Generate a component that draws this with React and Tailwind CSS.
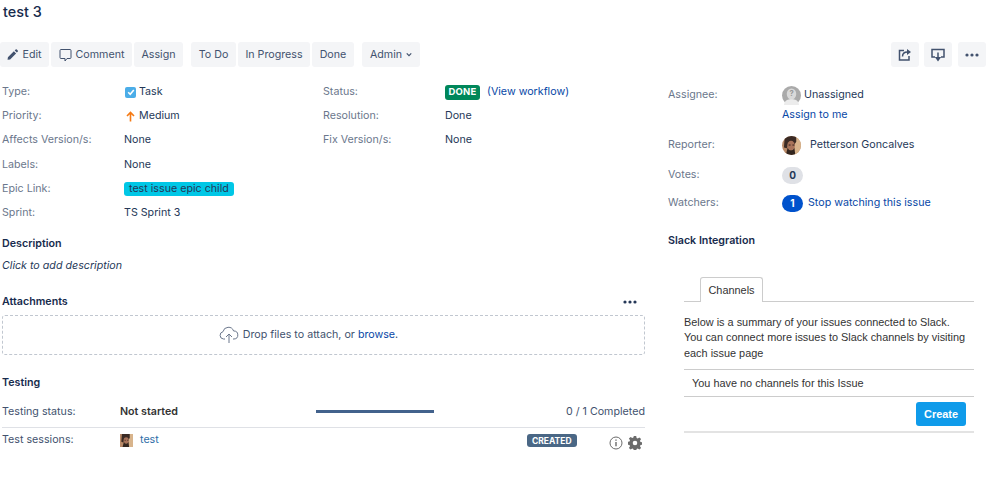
import React from "react";

const Btn = ({ w, children }) => (
  <div className={`${w} h-[25px] shrink-0 flex items-center justify-center gap-[4px] rounded-[3px] bg-[#f4f5f7] text-[#42526e]`}>{children}</div>
);

const Row = ({ label, children, second, secondLabel }) => (
  <div className="flex h-[24.2px] items-center">
    <div className="w-[124px] pl-[2px] text-[#6b778c]">{label}</div>
    <div className="w-[199px] flex items-center text-[#253858]">{children}</div>
    {secondLabel && <div className="w-[122px] text-[#6b778c]">{secondLabel}</div>}
    {second}
  </div>
);

const Face = () => (
  <>
    <rect width="20" height="20" fill="#b98a68" />
    <rect x="13" width="7" height="20" fill="#d8b48c" />
    <path d="M3 0h12v6l-2 3H7L5 13 2 12z" fill="#3a2a24" />
    <ellipse cx="9.5" cy="10" rx="4" ry="5" fill="#a8735a" />
    <path d="M6 12c1 4 6 4 7 0l1 8H4z" fill="#33261f" />
    <rect x="7" y="9" width="2" height="1" fill="#2a1d18" />
    <rect x="11" y="9" width="2" height="1" fill="#2a1d18" />
  </>
);

const Dots = ({ color = "#42526e" }) => (
  <svg width="14" height="4" viewBox="0 0 14 4" fill={color}>
    <circle cx="2" cy="2" r="1.6" /><circle cx="7" cy="2" r="1.6" /><circle cx="12" cy="2" r="1.6" />
  </svg>
);

export default function App() {
  return (
    <div className="w-[999px] h-[489px] overflow-hidden bg-white text-[10.7px] leading-[16px] font-['Inter','Liberation_Sans',sans-serif] flex">
      <div className="w-[645px] shrink-0">
        <h1 className="pl-[3px] pt-[1px] h-[42px] text-[14.4px] leading-[22px] font-medium text-[#172b4d]">test 3</h1>
        <div className="flex h-[25px]">
          <div className="flex gap-[2px]">
            <Btn w="w-[49px]">
              <svg width="11" height="11" viewBox="0 0 12 12" fill="#42526e"><path d="M1 9l6.5-6.5 2.4 2.4L3.4 11.4 0.6 11.8zM8.4 1.6l1-1a1 1 0 0 1 1.3 0l1 1a1 1 0 0 1 0 1.3l-1 1z" /></svg>
              Edit
            </Btn>
            <Btn w="w-[81px]">
              <svg width="13" height="14" viewBox="0 0 13 14" fill="none" stroke="#42526e" strokeWidth="1"><path d="M2 1.5h9a1 1 0 0 1 1 1v7a1 1 0 0 1-1 1H8l-2 2.5v-2.5H2a1 1 0 0 1-1-1v-7a1 1 0 0 1 1-1z" /></svg>
              Comment
            </Btn>
            <Btn w="w-[49px]">Assign</Btn>
          </div>
          <div className="flex gap-[2px] ml-[8px]">
            <Btn w="w-[45px]">To Do</Btn>
            <Btn w="w-[72px]">In Progress</Btn>
            <Btn w="w-[42px]">Done</Btn>
          </div>
          <div className="ml-[8px]">
            <Btn w="w-[58px]">
              Admin
              <svg width="6" height="5" viewBox="0 0 8 6" fill="none" stroke="#42526e" strokeWidth="1.6"><path d="M1 1.5l3 3 3-3" /></svg>
            </Btn>
          </div>
        </div>
        <div className="mt-[12px] pt-[1px]">
          <Row label="Type:" secondLabel="Status:" second={
            <div className="flex items-center">
              <span className="h-[15px] w-[35px] flex items-center justify-center rounded-[3px] bg-[#00875a] text-white text-[9.5px] font-bold tracking-[0.2px]">DONE</span>
              <span className="ml-[7px] text-[#0747a6]">(View workflow)</span>
            </div>
          }>
            <span className="ml-[1px] w-[11px] h-[11px] rounded-[2px] bg-[#4bade8] flex items-center justify-center">
              <svg width="8" height="8" viewBox="0 0 8 8" fill="none" stroke="#fff" strokeWidth="1.6"><path d="M1.2 4.2l2 2 3.6-4.2" /></svg>
            </span>
            <span className="ml-[3px]">Task</span>
          </Row>
          <Row label="Priority:" secondLabel="Resolution:" second={<span className="text-[#253858]">Done</span>}>
            <svg className="ml-[1px]" width="11" height="11" viewBox="0 0 11 11" fill="none" stroke="#f57a14" strokeWidth="1.6"><path d="M5.5 10.5V1.5M2 5l3.5-3.5L9 5" /></svg>
            <span className="ml-[3px]">Medium</span>
          </Row>
          <Row label="Affects Version/s:" secondLabel="Fix Version/s:" second={<span className="text-[#253858]">None</span>}>None</Row>
          <Row label="Labels:">None</Row>
          <Row label="Epic Link:">
            <span className="h-[14px] px-[5px] flex items-center rounded-[3px] bg-[#00c7e6] text-[#253858]">test issue epic child</span>
          </Row>
          <Row label="Sprint:">TS Sprint 3</Row>
        </div>

        <h2 className="mt-[11px] pl-[2px] h-[16px] font-semibold text-[#172b4d]">Description</h2>
        <p className="mt-[6px] pl-[2px] italic text-[#253858]">Click to add description</p>

        <div className="mt-[20px] flex items-center justify-between pl-[2px] pr-[8px] h-[16px]">
          <h2 className="font-semibold text-[#172b4d]">Attachments</h2>
          <Dots color="#253858" />
        </div>
        <div className="mt-[5px] ml-[2px] h-[40px] pr-[30px] flex items-center justify-center gap-[4px] rounded-[3px] border border-dashed border-[#c1c7d0] text-[#42526e]">
          <svg width="20" height="18" viewBox="0 0 20 18" fill="none" stroke="#6b778c" strokeWidth="1"><path d="M6 13H4.5a3.7 3.7 0 0 1-.5-7.3A5.5 5.5 0 0 1 14.6 5a4 4 0 0 1 .4 8h-1M10 17V8M7 11l3-3 3 3" /></svg>
          <span>Drop files to attach, or <span className="text-[#0747a6]">browse</span>.</span>
        </div>

        <h2 className="mt-[20px] pl-[2px] h-[16px] font-semibold text-[#172b4d]">Testing</h2>
        <div className="mt-[13px] ml-[2px] h-[24px] flex items-center border-b border-[#dfe1e6] pb-[8px] text-[#333]">
          <span className="w-[118px] text-[#42526e]">Testing status:</span>
          <span className="w-[196px] font-semibold">Not started</span>
          <span className="w-[118px] h-[3px] bg-[#42628c]" />
          <span className="ml-auto text-[#42526e]">0 / 1 Completed</span>
        </div>
        <div className="ml-[2px] h-[24px] flex items-center text-[#42526e]">
          <span className="w-[118px]">Test sessions:</span>
          <svg className="w-[13px] h-[13px]" viewBox="0 0 20 20"><Face /></svg>
          <span className="ml-[7px] text-[#2f6ea8]">test</span>
          <span className="ml-[368px] mt-[1px] w-[50px] h-[13px] flex items-center justify-center rounded-[3px] bg-[#4a6785] text-white text-[8.5px] font-bold">CREATED</span>
          <svg className="ml-[32px] mt-[6px]" width="14" height="14" viewBox="0 0 14 14" fill="none" stroke="#6b6b6b" strokeWidth="1"><circle cx="7" cy="7" r="6" /><path d="M7 6v4.2M7 3.4v1.4" strokeWidth="1.4" /></svg>
          <svg className="ml-[5px] mt-[6px]" width="14" height="14" viewBox="0 0 14 14" fill="#6b6b6b"><path fillRule="evenodd" d="M5.8 0h2.4l.4 2 1.1.5 1.7-1.1 1.7 1.7-1.1 1.7.5 1.1 2 .4v2.4l-2 .4-.5 1.1 1.1 1.7-1.7 1.7-1.7-1.1-1.1.5-.4 2H5.8l-.4-2-1.1-.5-1.7 1.1-1.7-1.7 1.1-1.7-.5-1.1-2-.4V5.8l2-.4.5-1.1L.9 2.6l1.7-1.7 1.7 1.1 1.1-.5zM7 4.7a2.3 2.3 0 1 0 0 4.6 2.3 2.3 0 0 0 0-4.6z" /></svg>
        </div>
      </div>

      <div className="ml-[23px] flex-1 pr-[13px]">
        <div className="pt-[42px] flex justify-end">
          <Btn w="w-[28px]">
            <svg width="14" height="13" viewBox="0 0 14 13" fill="none" stroke="#42526e" strokeWidth="1.5"><path d="M6 2.5H1.5v9.5h9.5V8" /><path d="M4.5 8.5c0-3 2-4.5 5-4.5" /><path d="M9 1l4 3-4 3z" fill="#42526e" stroke="none" /></svg>
          </Btn>
          <div className="ml-[5px]">
            <Btn w="w-[28px]">
              <svg width="14" height="14" viewBox="0 0 14 14" fill="none" stroke="#42526e" strokeWidth="1.5"><path d="M4 9H1V1.5h12V9h-3" /><path d="M7 4.5v6" /><path d="M3.8 9h6.4L7 13.5z" fill="#42526e" stroke="none" /></svg>
            </Btn>
          </div>
          <div className="ml-[6px]">
            <Btn w="w-[28px]"><Dots /></Btn>
          </div>
        </div>
        <div className="mt-[9px] flex">
          <span className="w-[114px] pt-[11px] text-[#6b778c]">Assignee:</span>
          <div>
            <div className="flex items-center h-[20px] mt-[9px] text-[#253858]">
              <svg className="w-[19px] h-[19px]" viewBox="0 0 20 20"><circle cx="10" cy="10" r="10" fill="#aaaaaa" /><ellipse cx="10" cy="8.5" rx="5" ry="6" fill="#d9d9d9" /><path d="M2 20c1-5 4-6 8-6s7 1 8 6z" fill="#ececec" /><text x="10" y="11" textAnchor="middle" fontSize="8" fontWeight="700" fill="#999">?</text></svg>
              <span className="ml-[3px]">Unassigned</span>
            </div>
            <div className="mt-[2px] text-[#0747a6]">Assign to me</div>
          </div>
        </div>
        <div className="mt-[12px] flex items-center h-[20px]">
          <span className="w-[114px] text-[#6b778c]">Reporter:</span>
          <svg className="w-[19px] h-[19px] rounded-full" viewBox="0 0 20 20"><Face /></svg>
          <span className="ml-[9px] text-[#253858]">Petterson Goncalves</span>
        </div>
        <div className="mt-[10px] flex items-center h-[20px]">
          <span className="w-[114px] text-[#6b778c]">Votes:</span>
          <span className="w-[21px] h-[17px] flex items-center justify-center rounded-full bg-[#dfe1e6] text-[#253858] text-[10px] font-bold">0</span>
        </div>
        <div className="mt-[8px] flex items-center h-[20px]">
          <span className="w-[114px] text-[#6b778c]">Watchers:</span>
          <span className="w-[21px] h-[17px] flex items-center justify-center rounded-full bg-[#0052cc] text-white text-[10px] font-bold">1</span>
          <span className="ml-[5px] text-[#0747a6]">Stop watching this issue</span>
        </div>
        <h2 className="mt-[20px] h-[16px] font-semibold text-[#172b4d]">Slack Integration</h2>
        <div className="ml-[16px] mt-[28px] w-[290px] font-['Liberation_Sans',sans-serif] text-[10.9px] text-[#333]">
          <div className="flex border-b border-[#ccc] h-[25px]">
            <span className="ml-[16px] w-[63px] h-[25px] bg-white flex items-center justify-center rounded-t-[3px] border border-b-0 border-[#ccc]">Channels</span>
          </div>
          <p className="mt-[13px] leading-[15.4px]">Below is a summary of your issues connected to Slack.<br />You can connect more issues to Slack channels by visiting<br />each issue page</p>
          <div className="mt-[8px] h-[28px] flex items-center pl-[8px] border-t border-b border-[#ccc]">You have no channels for this Issue</div>
          <div className="h-[36px] flex items-center justify-end pr-[8px] border-b-2 border-[#e3e3e3]">
            <span className="w-[50px] h-[24px] flex items-center justify-center rounded-[3px] bg-[#0f9bea] text-white font-bold">Create</span>
          </div>
        </div>
      </div>
    </div>
  );
}
